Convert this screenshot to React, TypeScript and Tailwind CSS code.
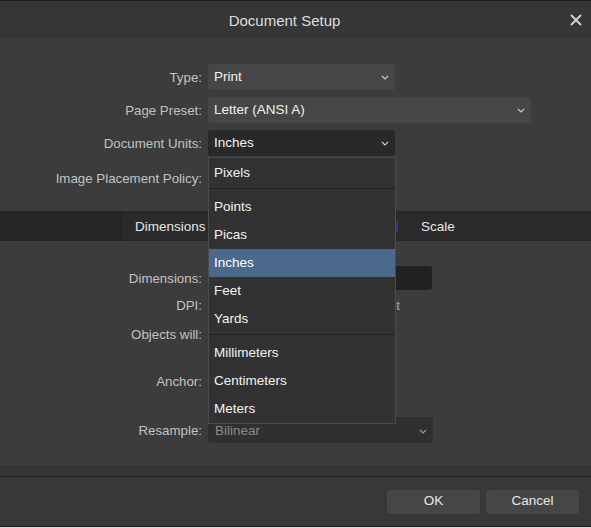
import React from 'react';

const FONT = { fontFamily: '"Liberation Sans", Arial, sans-serif' };

function Chevron({ className = '' }: { className?: string }) {
  return (
    <svg width="8" height="5" viewBox="0 0 8 5" className={className}>
      <path d="M0.8 0.8 L4 4 L7.2 0.8" fill="none" stroke="currentColor" strokeWidth="1.2" />
    </svg>
  );
}

function Label({ children }: { children: React.ReactNode }) {
  return <div className="w-[203px] shrink-0 pr-[1px] pt-px text-right text-[13.3px] text-[#c2c2c2]">{children}</div>;
}

const UNITS: (string | null)[] = [
  'Pixels',
  null,
  'Points',
  'Picas',
  'Inches',
  'Feet',
  'Yards',
  null,
  'Millimeters',
  'Centimeters',
  'Meters',
];

export default function App() {
  return (
    <div style={FONT} className="relative h-[528px] w-[591px] overflow-hidden bg-[#3c3c3c] select-none">
      <div className="h-px bg-[#1f1f1f]" />

      {/* title bar */}
      <div className="relative flex h-[37px] items-center justify-center bg-[#363636] pr-[22px] pt-[3px]">
        <span className="text-[15px] text-[#dedede]">Document Setup</span>
        <svg width="12" height="12" viewBox="0 0 12 12" className="absolute right-[9px] top-[13px] text-[#d6d6d6]">
          <path d="M1 1 L11 11 M11 1 L1 11" stroke="currentColor" strokeWidth="1.8" />
        </svg>
      </div>

      {/* top section */}
      <div className="flex h-[173px] flex-col pt-[26px]">
        <div className="flex h-[26px] items-center">
          <Label>Type:</Label>
          <div className="ml-[5px] flex h-full w-[187px] items-center justify-between rounded-[3px] bg-[#464646] pl-[6px] pr-[6px] pt-px text-[13.5px] text-[#f2f2f2]">
            <span>Print</span>
            <Chevron className="text-[#cfcfcf]" />
          </div>
        </div>
        <div className="mt-[7px] flex h-[26px] items-center">
          <Label>Page Preset:</Label>
          <div className="ml-[5px] flex h-full w-[323px] items-center justify-between rounded-[3px] bg-[#464646] pl-[6px] pr-[6px] pt-px text-[13.5px] text-[#f2f2f2]">
            <span>Letter (ANSI A)</span>
            <Chevron className="text-[#cfcfcf]" />
          </div>
        </div>
        <div className="mt-[7px] flex h-[26px] items-center">
          <Label>Document Units:</Label>
          <div className="ml-[5px] flex h-full w-[187px] items-center justify-between rounded-[3px] bg-[#292929] pl-[6px] pr-[6px] pt-px text-[13.5px] text-[#f2f2f2]">
            <span>Inches</span>
            <Chevron className="text-[#cfcfcf]" />
          </div>
        </div>
        <div className="mt-[9px] flex h-[26px] items-center">
          <Label>Image Placement Policy:</Label>
        </div>
      </div>

      {/* tab bar */}
      <div className="flex h-[30px] items-center bg-[#2a2a2a] text-[13.5px] text-[#e6e6e6]">
        <div className="h-full w-[123px] bg-[#252525]" />
        <div className="flex h-full w-[273px] items-center pl-[12px] pt-[2px]">Dimensions</div>
        <div className="h-[11px] w-[2px] bg-[#2e3a8c]" />
        <div className="pl-[23px] pt-[2px]">Scale</div>
      </div>

      {/* lower section */}
      <div className="flex h-[224px] flex-col pt-[25px]">
        <div className="flex h-[24px] items-center">
          <Label>Dimensions:</Label>
          <div className="ml-[5px] h-full w-[224px] rounded-[3px] bg-[#222222]" />
        </div>
        <div className="mt-[3px] flex h-[24px] items-center">
          <Label>DPI:</Label>
          <div className="ml-[5px] w-[192px] pt-[3px] text-right text-[13.5px] text-[#86aacb]">Set</div>
        </div>
        <div className="mt-[5px] flex h-[24px] items-center">
          <Label>Objects will:</Label>
        </div>
        <div className="mt-[14px] flex h-[42px] items-center">
          <Label>Anchor:</Label>
        </div>
        <div className="mt-[15px] flex h-[26px] items-center">
          <Label>Resample:</Label>
          <div className="ml-[5px] flex h-full w-[225px] items-center justify-between rounded-[3px] bg-[#303030] pl-[7px] pr-[6px] pt-[2px] text-[13.5px] text-[#8a8a8a]">
            <span>Bilinear</span>
            <Chevron className="text-[#9a9a9a]" />
          </div>
        </div>
      </div>

      <div className="h-[11px] bg-[#353535]" />
      <div className="h-px bg-[#232323]" />

      {/* footer */}
      <div className="flex h-[49px] items-center justify-end gap-[6px] bg-[#383838] pr-[12px]">
        <button className="h-[24px] w-[93px] rounded-[3px] bg-[#464646] text-[13.5px] text-[#e8e8e8]">OK</button>
        <button className="h-[24px] w-[93px] rounded-[3px] bg-[#464646] text-[13.5px] text-[#e8e8e8]">Cancel</button>
      </div>
      <div className="h-px bg-[#1e1e1e]" />
      <div className="h-px bg-[#dcdcdc]" />

      {/* open units menu */}
      <div className="absolute left-[208px] top-[157px] w-[188px] border border-[#4b4b4b] bg-[#323232] pt-px text-[13.5px] text-[#f2f2f2]">
        {UNITS.map((u, i) =>
          u === null ? (
            <div key={i} className="mb-[4px] mt-px h-px bg-[#222222]" />
          ) : (
            <div
              key={i}
              className={
                'flex h-[28px] items-center pl-[5px] pt-px ' + (u === 'Inches' ? 'bg-[#4b6a8b] text-white' : '')
              }
            >
              {u}
            </div>
          )
        )}
      </div>
    </div>
  );
}
